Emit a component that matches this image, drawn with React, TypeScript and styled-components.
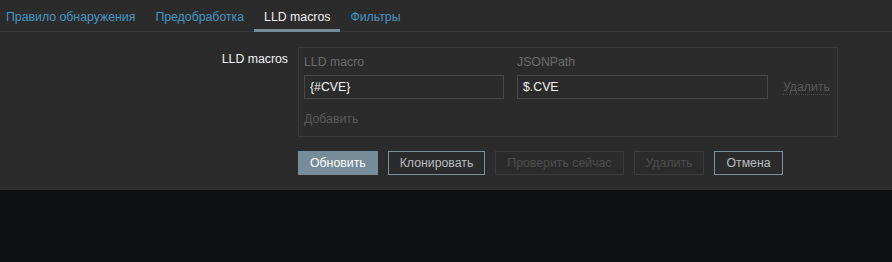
import styled, { createGlobalStyle } from 'styled-components';
import { ReactElement } from 'react';

const GlobalStyle = createGlobalStyle`
  html, body {
    margin: 0;
    padding: 0;
    background: #0e1012;
    height: 100%;
  }
  body {
    font-family: "Liberation Sans", Arial, sans-serif;
    font-size: 12.3px;
    color: #f2f2f2;
  }
`;

const Panel = styled.div`
  background: #2b2b2b;
  border-bottom: 3px solid #2e2e2e;
  height: 187px;
`;

const TabList = styled.ul`
  display: flex;
  margin: 0;
  padding: 0;
  list-style: none;
  height: 31px;
  border-bottom: 1px solid #383838;
`;

const Tab = styled.li<{ $active?: boolean }>`
  padding: 0 10px;
  line-height: 32px;
  color: ${p => (p.$active ? '#f2f2f2' : '#4796c4')};
  border-bottom: 3px solid ${p => (p.$active ? '#768d99' : 'transparent')};
  height: 28px;
  margin-top: 1px;
  cursor: pointer;

  &:first-child {
    padding-left: 6px;
  }
`;

const Form = styled.div`
  display: grid;
  grid-template-columns: 288px 1fr;
  column-gap: 10px;
  row-gap: 14px;
  padding-top: 15px;
`;

const Label = styled.div`
  text-align: right;
  padding-top: 5px;
  color: #f2f2f2;
`;

const MacroTable = styled.div`
  border: 1px solid #383838;
  padding: 3px 5px 6px;
  box-sizing: border-box;
  width: 540px;
  display: grid;
  grid-template-columns: 200px 251px auto;
  column-gap: 13px;
  row-gap: 2px;
  align-items: center;
`;

const Header = styled.div`
  line-height: 22px;
  color: #6b6b6b;
`;

const Input = styled.input`
  box-sizing: border-box;
  height: 24px;
  width: 100%;
  padding: 0 5px;
  background: #2b2b2b;
  border: 1px solid #474747;
  color: #f2f2f2;
  font-family: inherit;
  font-size: inherit;
  outline: none;
`;

const LinkButton = styled.span`
  justify-self: start;
  color: #5a5a5a;
  line-height: 14px;
  border-bottom: 1px dotted #4a4a4a;
  margin-left: 2px;
`;

const AddRow = styled.div`
  grid-column: 1 / -1;
  margin-top: 7px;
  line-height: 22px;
  color: #5a5a5a;
`;

const Buttons = styled.div`
  grid-column: 2;
  display: flex;
  gap: 10px;
`;

type Variant = 'main' | 'alt' | 'disabled';

const Button = styled.button<{ $variant: Variant }>`
  height: 24px;
  padding: 0 11px;
  font-family: inherit;
  font-size: inherit;
  box-sizing: border-box;
  border: 1px solid
    ${p => (p.$variant === 'main' ? '#768d99' : p.$variant === 'alt' ? '#7f929c' : '#3b3b3b')};
  background: ${p => (p.$variant === 'main' ? '#768d99' : '#2b2b2b')};
  color: ${p => (p.$variant === 'main' ? '#ffffff' : p.$variant === 'alt' ? '#b9bec1' : '#4d4d4d')};
  cursor: ${p => (p.$variant === 'disabled' ? 'default' : 'pointer')};
`;

const tabs = ['Правило обнаружения', 'Предобработка', 'LLD macros', 'Фильтры'];

export default function App(): ReactElement {
  return (
    <>
      <GlobalStyle />
      <Panel>
        <TabList>
          {tabs.map(t => (
            <Tab key={t} $active={t === 'LLD macros'}>{t}</Tab>
          ))}
        </TabList>
        <Form>
          <Label>LLD macros</Label>
          <MacroTable>
            <Header>LLD macro</Header>
            <Header>JSONPath</Header>
            <div />
            <Input defaultValue="{#CVE}" />
            <Input defaultValue="$.CVE" />
            <LinkButton>Удалить</LinkButton>
            <AddRow>Добавить</AddRow>
          </MacroTable>
          <Buttons>
            <Button $variant="main">Обновить</Button>
            <Button $variant="alt">Клонировать</Button>
            <Button $variant="disabled">Проверить сейчас</Button>
            <Button $variant="disabled">Удалить</Button>
            <Button $variant="alt">Отмена</Button>
          </Buttons>
        </Form>
      </Panel>
    </>
  );
}
